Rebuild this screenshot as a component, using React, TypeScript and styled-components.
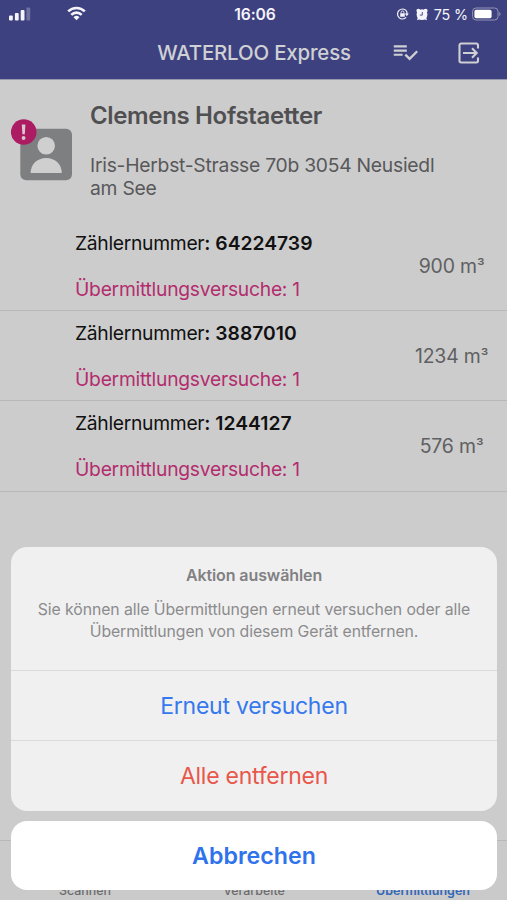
import React from 'react';
import styled, { createGlobalStyle } from 'styled-components';

const GlobalStyle = createGlobalStyle`
  *, *::before, *::after { box-sizing: border-box; }
  body {
    margin: 0;
    background: #cccccc;
    font-family: Inter, "Liberation Sans", sans-serif;
    font-variant-ligatures: none;
  }
  button { font-family: inherit; font-variant-ligatures: none; border: 0; padding: 0; background: none; }
  svg { display: block; }
`;

const Screen = styled.div`
  position: relative;
  display: flex;
  flex-direction: column;
  width: 507px;
  height: 900px;
  overflow: hidden;
  background: #cccccc;
`;

const Header = styled.header`
  height: 80px;
  background: #3e417f;
  border-bottom: 1px solid #9698b0;
`;

const StatusBar = styled.div`
  display: grid;
  grid-template-columns: 1fr auto 1fr;
  align-items: center;
  height: 28px;
  padding: 0 6px 0 9px;
  color: #f4f4fa;
`;

const StatusLeft = styled.div`
  display: flex;
  gap: 36px;
`;

const Clock = styled.time`
  font-size: 15.7px;
  font-weight: 600;
  letter-spacing: -0.1px;
`;

const StatusRight = styled.div`
  display: flex;
  align-items: center;
  justify-content: flex-end;
`;

const BatteryText = styled.span`
  margin: 0 4px 0 6px;
  font-size: 14.3px;
  letter-spacing: -0.1px;
  white-space: nowrap;
`;

const AlarmSlot = styled.span`
  margin-left: 7px;
`;

const TitleBar = styled.div`
  display: grid;
  grid-template-columns: 1fr auto 1fr;
  align-items: center;
  height: 49px;
`;

const Title = styled.h1`
  grid-column: 2;
  margin: 0;
  padding-left: 1px;
  color: #cfd0d4;
  font-size: 20.4px;
  font-weight: 550;
  letter-spacing: -0.15px;
`;

const Actions = styled.div`
  display: flex;
  justify-content: flex-end;
  gap: 40px;
  padding-right: 27px;
`;

const IconButton = styled.button`
  color: #cfd0d4;
`;

const Customer = styled.section`
  display: flex;
  height: 140px;
  padding: 22px 0 0 11px;
`;

const AvatarBox = styled.div`
  flex: none;
  width: 79px;
  padding-top: 16px;
`;

const CustomerName = styled.h2`
  margin: 0 0 24px;
  color: #505052;
  font-size: 24px;
  font-weight: 600;
  line-height: 28px;
  letter-spacing: -0.35px;
`;

const Address = styled.p`
  width: 370px;
  margin: 0;
  color: #58585a;
  font-size: 19.3px;
  line-height: 23.4px;
  letter-spacing: -0.25px;
`;

const MeterRow = styled.li`
  display: grid;
  grid-template-columns: 1fr 111px;
  align-items: center;
  height: 90px;
  padding-left: 75px;
  border-bottom: 1px solid #b8b8b8;
  &:first-child { height: 91px; padding-top: 2px; }
  &:last-child { height: 91px; }
`;

const MeterList = styled.ul`
  margin: 0;
  padding: 0;
  list-style: none;
`;

const MeterNumber = styled.div`
  color: #111111;
  font-size: 19.3px;
  line-height: 24px;
  letter-spacing: -0.3px;
  strong { font-weight: 600; letter-spacing: 0; }
`;

const Attempts = styled.div`
  margin-top: 22px;
  color: #b32d6e;
  font-size: 19.3px;
  line-height: 24px;
  letter-spacing: -0.26px;
`;

const Reading = styled.div`
  color: #606062;
  font-size: 19.4px;
  letter-spacing: -0.15px;
  text-align: center;
`;

const Cubed = styled.span`
  font-size: 17px;
`;

const TabBar = styled.nav`
  display: grid;
  grid-template-columns: repeat(3, 1fr);
  align-items: end;
  height: 60px;
  margin-top: auto;
  border-top: 1px solid #b8b8b8;
  background: #cacaca;
`;

const Tab = styled.div<{ $active?: boolean }>`
  padding: 0 0 1px 1px;
  color: ${p => (p.$active ? '#3266b8' : '#6c6c6e')};
  font-size: ${p => (p.$active ? 12.5 : 12.4)}px;
  font-weight: ${p => (p.$active ? 600 : 500)};
  line-height: 16px;
  text-align: center;
`;

const ActionSheet = styled.div`
  position: absolute;
  right: 10px;
  bottom: 10px;
  left: 11px;
  display: flex;
  flex-direction: column;
  gap: 10px;
`;

const SheetPanel = styled.div`
  height: 264px;
  border-radius: 16px;
  overflow: hidden;
  background: #f0f0f0;
`;

const SheetHead = styled.div`
  height: 123px;
  padding-top: 18px;
  color: #8b8b8d;
  text-align: center;
`;

const SheetTitle = styled.h3`
  margin: 0 0 14px;
  color: #818183;
  font-size: 16px;
  font-weight: 600;
  line-height: 20px;
  letter-spacing: -0.1px;
`;

const SheetText = styled.p`
  margin: 0 auto;
  width: 450px;
  font-size: 15.8px;
  line-height: 22px;
  letter-spacing: -0.08px;
`;

const SheetAction = styled.button<{ $danger?: boolean }>`
  display: block;
  width: 100%;
  height: 70px;
  padding-top: 1px;
  border-top: 1px solid #dadada;
  color: ${p => (p.$danger ? '#e8574b' : '#3678ee')};
  font-size: 23px;
  letter-spacing: -0.25px;
`;

const CancelButton = styled.button`
  height: 69px;
  border-radius: 16px;
  background: #ffffff;
  color: #2f73ec;
  font-size: 23.2px;
  font-weight: 600;
`;

const SignalIcon = () => (
  <svg width="22" height="16" viewBox="0 0 22 16" fill="currentColor">
    <rect x="0" y="9.6" width="3.8" height="5" rx="1" />
    <rect x="5.9" y="7.1" width="3.8" height="7.5" rx="1" />
    <rect x="11.7" y="4.1" width="3.8" height="10.5" rx="1" />
    <rect x="17.4" y="1.6" width="3.8" height="13" rx="1" opacity=".27" />
  </svg>
);

const WifiIcon = () => (
  <svg width="19" height="16" viewBox="0 0 19 16" fill="none" stroke="currentColor" strokeWidth="2.6">
    <path d="M1.2 5.4a11.8 11.8 0 0 1 16.6 0" />
    <path d="M4.3 8.8a7.4 7.4 0 0 1 10.4 0" />
    <path d="M9.5 14.3 6.5 11.3a4.3 4.3 0 0 1 6 0Z" fill="currentColor" stroke="none" />
  </svg>
);

const RotationLockIcon = () => (
  <svg width="13" height="12" viewBox="0 0 13 12" fill="none" stroke="currentColor">
    <path d="M10.2 2.6A5 5 0 1 0 10.2 9.4" strokeWidth="1.2" />
    <path d="M10.2 2.6A5 5 0 0 1 11 6" strokeWidth="1.2" />
    <path d="M8.8 5.6h4L10.8 8.2Z" fill="currentColor" stroke="none" />
    <rect x="4.2" y="5.3" width="4.6" height="3.5" rx=".5" fill="currentColor" stroke="none" />
    <path d="M5.1 5.5V4.3a1.4 1.4 0 0 1 2.8 0v1.2" strokeWidth=".9" />
  </svg>
);

const AlarmIcon = () => (
  <svg width="12" height="13" viewBox="0 0 12 13">
    <g fill="currentColor">
      <circle cx="6" cy="6.6" r="5.4" />
      <circle cx="2.4" cy="2.7" r="2" />
      <circle cx="9.6" cy="2.7" r="2" />
      <path d="m1 12.2 1.2-4 3 2.6ZM11 12.2l-1.2-4-3 2.6Z" />
    </g>
    <path d="M6.3 4v3.1H3.8" fill="none" stroke="#3e417f" strokeWidth=".9" />
  </svg>
);

const BatteryIcon = () => (
  <svg width="29" height="14" viewBox="0 0 29 14">
    <rect x=".6" y="1" width="25.4" height="12" rx="3.4" fill="none" stroke="#9294b7" strokeWidth="1" />
    <rect x="2.4" y="2.8" width="17.2" height="8.4" rx="1.7" fill="#fff" />
    <path d="M27.3 5v4a2.2 2.2 0 0 0 0-4Z" fill="#9294b7" />
  </svg>
);

const ListCheckIcon = () => (
  <svg width="25" height="22" viewBox="0 0 25 22" fill="none" stroke="currentColor" strokeWidth="2">
    <path d="M.8 4.4h13M.8 8.6h13M.8 12.8h8.8" strokeWidth="2.1" />
    <path d="m12.3 12.6 4.3 4.3 7.6-7.7" strokeWidth="2.3" />
  </svg>
);

const ExitIcon = () => (
  <svg width="22" height="22" viewBox="0 0 22 22" fill="none" stroke="currentColor" strokeWidth="2.1">
    <path d="M20 6.5V3.2A1.7 1.7 0 0 0 18.3 1.5H3.2A1.7 1.7 0 0 0 1.5 3.2v15.6a1.7 1.7 0 0 0 1.7 1.7h15.1a1.7 1.7 0 0 0 1.7-1.7v-3.3" />
    <path d="M5 11h13.5M14 6.3l4.7 4.7-4.7 4.7" />
  </svg>
);

const Avatar = () => (
  <svg width="62" height="63" viewBox="0 0 62 63">
    <rect x="9.3" y="10.8" width="51.7" height="51.4" rx="6" fill="#7d7f80" />
    <circle cx="35.2" cy="27.8" r="8.8" fill="#cfcfcf" />
    <path d="M19.6 55c0-8.6 6.4-15 15.6-15s15.6 6.4 15.6 15Z" fill="#cfcfcf" />
    <circle cx="12.7" cy="14" r="12.8" fill="#ab1c63" />
    <path d="M10.8 6.4h3.6l-.6 9.8h-2.4Z" fill="#d8c8d0" />
    <circle cx="12.6" cy="20" r="1.9" fill="#d8c8d0" />
  </svg>
);

const meters = [
  { number: '64224739', attempts: 1, value: '900' },
  { number: '3887010', attempts: 1, value: '1234' },
  { number: '1244127', attempts: 1, value: '576' },
];

export default function App() {
  return (
    <>
      <GlobalStyle />
      <Screen>
        <Header>
          <StatusBar>
            <StatusLeft><SignalIcon /><WifiIcon /></StatusLeft>
            <Clock>16:06</Clock>
            <StatusRight>
              <RotationLockIcon />
              <AlarmSlot><AlarmIcon /></AlarmSlot>
              <BatteryText>75 %</BatteryText>
              <BatteryIcon />
            </StatusRight>
          </StatusBar>
          <TitleBar>
            <Title>WATERLOO Express</Title>
            <Actions>
              <IconButton aria-label="Liste"><ListCheckIcon /></IconButton>
              <IconButton aria-label="Abmelden"><ExitIcon /></IconButton>
            </Actions>
          </TitleBar>
        </Header>
        <Customer>
          <AvatarBox><Avatar /></AvatarBox>
          <div>
            <CustomerName>Clemens Hofstaetter</CustomerName>
            <Address>Iris-Herbst-Strasse 70b 3054 Neusiedl am See</Address>
          </div>
        </Customer>
        <MeterList>
          {meters.map(m => (
            <MeterRow key={m.number}>
              <div>
                <MeterNumber>Zählernummer<strong>: {m.number}</strong></MeterNumber>
                <Attempts>Übermittlungsversuche: {m.attempts}</Attempts>
              </div>
              <Reading>{m.value} m<Cubed>³</Cubed></Reading>
            </MeterRow>
          ))}
        </MeterList>
        <TabBar>
          <Tab>Scannen</Tab>
          <Tab>Verarbeite</Tab>
          <Tab $active>Übermittlungen</Tab>
        </TabBar>
        <ActionSheet>
          <SheetPanel>
            <SheetHead>
              <SheetTitle>Aktion auswählen</SheetTitle>
              <SheetText>Sie können alle Übermittlungen erneut versuchen oder alle Übermittlungen von diesem Gerät entfernen.</SheetText>
            </SheetHead>
            <SheetAction>Erneut versuchen</SheetAction>
            <SheetAction $danger>Alle entfernen</SheetAction>
          </SheetPanel>
          <CancelButton>Abbrechen</CancelButton>
        </ActionSheet>
      </Screen>
    </>
  );
}
